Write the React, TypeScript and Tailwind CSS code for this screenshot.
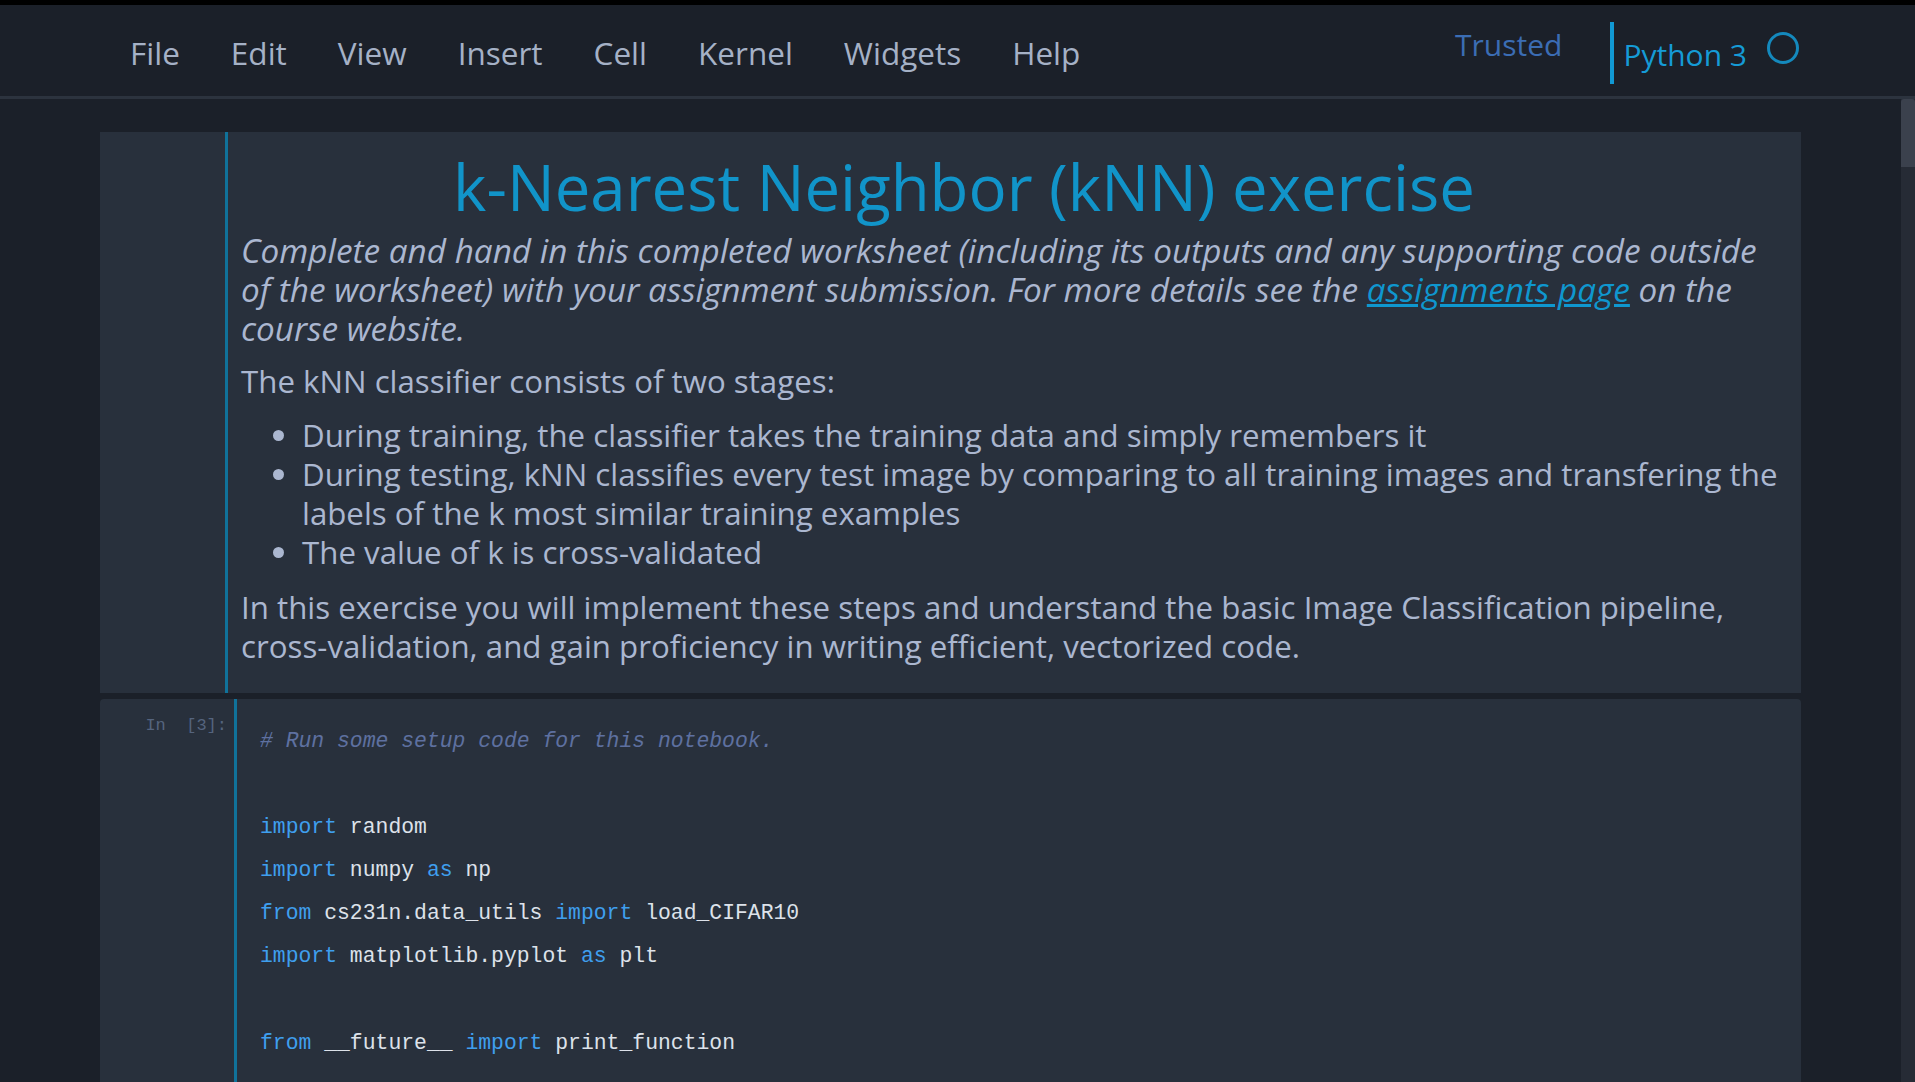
import React from "react";

const menuItems = ["File", "Edit", "View", "Insert", "Cell", "Kernel", "Widgets", "Help"];

const sans = "font-['Open_Sans','Noto_Sans',sans-serif]";
const mono = "font-['Liberation_Mono','DejaVu_Sans_Mono',monospace]";

type Tok = { t: string; k?: "kw" | "cm" };

const codeLines: Tok[][] = [
  [{ t: "# Run some setup code for this notebook.", k: "cm" }],
  [],
  [{ t: "import", k: "kw" }, { t: " random" }],
  [{ t: "import", k: "kw" }, { t: " numpy " }, { t: "as", k: "kw" }, { t: " np" }],
  [
    { t: "from", k: "kw" },
    { t: " cs231n.data_utils " },
    { t: "import", k: "kw" },
    { t: " load_CIFAR10" },
  ],
  [
    { t: "import", k: "kw" },
    { t: " matplotlib.pyplot " },
    { t: "as", k: "kw" },
    { t: " plt" },
  ],
  [],
  [
    { t: "from", k: "kw" },
    { t: " __future__ " },
    { t: "import", k: "kw" },
    { t: " print_function" },
  ],
  [],
];

function Header() {
  return (
    <header className="h-[91px] flex items-center bg-[#1b2029]">
      <nav className={`flex items-center gap-[51px] pl-[130px] pt-[4px] text-[31.5px] text-[#a5b1c6] ${sans}`}>
        {menuItems.map((m) => (
          <span key={m}>{m}</span>
        ))}
      </nav>
      <div className={`ml-auto flex items-center pr-[116px] ${sans}`}>
        <span className="text-[30px] text-[#3b6db4] mb-[12px]">Trusted</span>
        <span className="ml-[48px] w-[4px] h-[62px] bg-[#1199d4] mt-[4px]" />
        <span className="ml-[9px] text-[30px] text-[#159bd6] mt-[7px]">Python 3</span>
        <span className="ml-[20px] mb-[6px] w-[32px] h-[32px] rounded-full border-[3px] border-[#1489bd]" />
      </div>
    </header>
  );
}

function MarkdownCell() {
  return (
    <div className="flex bg-[#28303c]">
      <div className="w-[125px] shrink-0" />
      <div className={`flex-1 border-l-[3px] border-[#10729a] pl-[13px] pr-[12px] pt-[20px] pb-[27px] text-[31.25px] leading-[39px] text-[#abb7d0] ${sans}`}>
        <h1 className="text-center pr-[102px] text-[63.5px] leading-[70px] text-[#1194c9] mb-[9px]">
          k-Nearest Neighbor (kNN) exercise
        </h1>
        <p className="italic text-[33.3px]">
          Complete and hand in this completed worksheet (including its outputs and any supporting code outside
          <br />
          of the worksheet) with your assignment submission. For more details see the{" "}
          <a href="#" className="text-[#0f97cf] underline">
            assignments page
          </a>{" "}
          on the
          <br />
          course website.
        </p>
        <p className="mt-[14px]">The kNN classifier consists of two stages:</p>
        <ul className="mt-[15px] list-disc pl-[61px]">
          <li>During training, the classifier takes the training data and simply remembers it</li>
          <li>
            During testing, kNN classifies every test image by comparing to all training images and transfering the
            <br />
            labels of the k most similar training examples
          </li>
          <li>The value of k is cross-validated</li>
        </ul>
        <p className="mt-[16px]">
          In this exercise you will implement these steps and understand the basic Image Classification pipeline,
          <br />
          cross-validation, and gain proficiency in writing efficient, vectorized code.
        </p>
      </div>
    </div>
  );
}

function CodeCell() {
  return (
    <div className="mt-[6px] flex bg-[#28303c] rounded-t-[4px]">
      <div className={`w-[134px] shrink-0 pt-[14px] pr-[7px] text-right text-[17px] text-[#55647e] whitespace-pre ${mono}`}>
        In  [3]:
      </div>
      <div className={`flex-1 border-l-[3px] border-[#10729a] pl-[23px] pt-[21px] text-[21.4px] leading-[43.1px] text-[#dde2ea] ${mono}`}>
        {codeLines.map((line, i) => (
          <div key={i} className="h-[43.1px] whitespace-pre">
            {line.map((tok, j) => (
              <span
                key={j}
                className={
                  tok.k === "kw"
                    ? "text-[#3f9fee]"
                    : tok.k === "cm"
                    ? "italic text-[#5e70a0]"
                    : undefined
                }
              >
                {tok.t}
              </span>
            ))}
          </div>
        ))}
      </div>
    </div>
  );
}

export default function App() {
  return (
    <div className="h-[1082px] overflow-hidden flex flex-col bg-[#1b2029]">
      <div className="h-[5px] bg-black shrink-0" />
      <Header />
      <div className="h-[3px] bg-[#2c333e] shrink-0" />
      <div className="flex flex-1 min-h-0">
        <main className="flex-1 pt-[33px] pl-[100px]">
          <div className="w-[1701px]">
            <MarkdownCell />
            <CodeCell />
          </div>
        </main>
        <div className="w-[14px] shrink-0 bg-[#262b35]">
          <div className="h-[68px] bg-[#3b414d] rounded-t-[3px]" />
        </div>
      </div>
    </div>
  );
}
